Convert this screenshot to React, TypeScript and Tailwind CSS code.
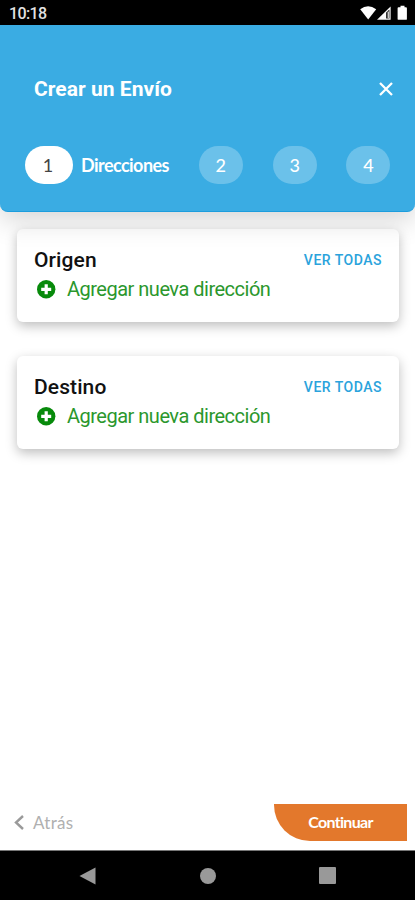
import React from 'react';

function StatusBar() {
  return (
    <div className="flex h-[25px] shrink-0 items-center justify-between bg-black pl-[9px] pr-[6px]">
      <span className="pt-[3px] text-[16px] leading-[22px] font-medium tracking-[-0.65px] text-[#e4e4e4]">10:18</span>
      <svg width="50" height="25" viewBox="0 0 50 25" fill="#fff">
        <path d="M1.2 9.2Q9 3.2 17.2 9.2L9.2 19.6Z" />
        <path d="M18 19.8L31.6 6.4V19.8Z" />
        <path d="M27.2 12.4L30.4 9.4V18.4H27.2Z" fill="#000" />
        <path d="M28.5 11.5h1.5v7h-1.5Z" fill="#ccc" />
        <path d="M38.6 8.2q0-.9.9-.9h2V5.8h4v1.5h1.5q.9 0 .9.9v10.7q0 .9-.9.9h-7.5q-.9 0-.9-.9Z" />
      </svg>
    </div>
  );
}

function Step({ value }: { value: number }) {
  return (
    <div className="flex h-[38px] w-[44px] items-center justify-center rounded-[19px] bg-white/25 text-[18px] font-medium text-white">
      {value}
    </div>
  );
}

function Header() {
  return (
    <header className="relative z-10 h-[187px] shrink-0 rounded-b-[8px] border-b border-[#1c9ddd] bg-[#3aace3] shadow-[0_8px_28px_rgba(0,0,0,0.17)]">
      <div className="flex items-center justify-between pt-[50px] pr-[22px] pl-[34px]">
        <h1 className="text-[21px] leading-[28px] font-bold tracking-[0.04px] text-white">Crear un Envío</h1>
        <svg width="14" height="14" viewBox="0 0 14 14" fill="none" stroke="#fff" strokeWidth="2.3">
          <path d="M1 1L13 13M13 1L1 13" />
        </svg>
      </div>
      <div className="flex items-center justify-between pt-[43px] pr-[24.5px] pl-[25px] font-['Lato',sans-serif]">
        <div className="flex items-center gap-[8px]">
          <div className="flex h-[38px] w-[48px] items-center justify-center rounded-[19px] bg-white pr-[2px] text-[18px] text-[#444]">1</div>
          <span className="w-[88px] text-[18px] font-bold tracking-[-0.55px] text-white">Direcciones</span>
        </div>
        <Step value={2} />
        <Step value={3} />
        <Step value={4} />
      </div>
    </header>
  );
}

function AddressCard({ title }: { title: string }) {
  return (
    <section className="h-[93px] rounded-[6px] bg-white pt-[18px] pr-[17px] pl-[17px] shadow-[0_4px_12px_rgba(0,0,0,0.26)]">
      <div className="flex items-center justify-between">
        <h2 className="text-[21px] leading-[27px] font-medium tracking-[0.1px] text-[#111]">{title}</h2>
        <button className="text-[14px] leading-[27px] font-medium tracking-[0.5px] text-[#2ba3dc]">VER TODAS</button>
      </div>
      <div className="flex items-center gap-[11px] pl-[3px]">
        <svg width="19" height="19" viewBox="0 0 19 19">
          <circle cx="9.2" cy="9.3" r="9.2" fill="#078a0b" />
          <path d="M9.2 4.3V14.3M4.2 9.3H14.2" stroke="#fff" strokeWidth="3.2" />
        </svg>
        <span className="text-[20px] leading-[30px] tracking-[-0.5px] text-[#2b972d]">Agregar nueva dirección</span>
      </div>
    </section>
  );
}

function Footer() {
  return (
    <footer className="flex h-[46px] shrink-0 items-start justify-between pr-[8px] pl-[14px] font-['Lato',sans-serif]">
      <button className="flex h-[37px] items-center gap-[9px] text-[17px] tracking-[0.3px] text-[#b0b0b0]">
        <svg width="10" height="15" viewBox="0 0 10 15" fill="none" stroke="#9a9a9a" strokeWidth="2.4">
          <path d="M9 1L2 7.5L9 14" />
        </svg>
        Atrás
      </button>
      <button className="h-[37px] w-[133px] rounded-bl-[36px] bg-[#e3782c] pb-[2px] text-[16px] font-bold tracking-[-0.7px] text-white">Continuar</button>
    </footer>
  );
}

function NavBar() {
  return (
    <nav className="flex h-[50px] shrink-0 items-center justify-between border-t border-[#777] bg-black pr-[79px] pl-[79px]">
      <svg width="17" height="18" viewBox="0 0 17 18" fill="#999"><path d="M0.5 9L16.5 0.5V17.5Z" /></svg>
      <div className="h-[16px] w-[16px] rounded-full bg-[#999]" />
      <div className="h-[17px] w-[17px] rounded-[1px] bg-[#999]" />
    </nav>
  );
}

export default function App() {
  return (
    <div className="flex h-[900px] w-[415px] flex-col overflow-hidden bg-white font-['Roboto',sans-serif]">
      <StatusBar />
      <Header />
      <main className="flex flex-1 flex-col gap-[34px] pt-[17px] pr-[16px] pl-[17px]">
        <AddressCard title="Origen" />
        <AddressCard title="Destino" />
      </main>
      <Footer />
      <NavBar />
    </div>
  );
}
